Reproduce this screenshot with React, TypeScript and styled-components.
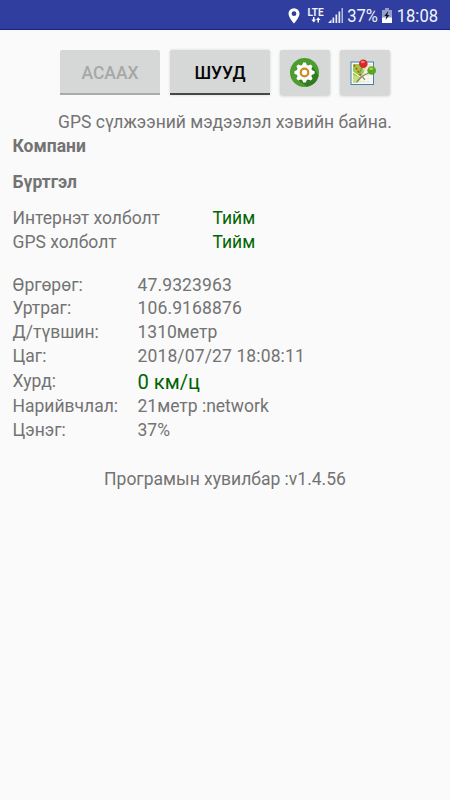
import React from "react";
import styled, { createGlobalStyle } from "styled-components";

const GlobalStyle = createGlobalStyle`
  * { box-sizing: border-box; }
  html, body { margin: 0; background: #fafafa; }
  body { font-family: Roboto, "Noto Sans", sans-serif; color: #737373; font-size: 17.5px; }
`;

const Screen = styled.div`
  width: 450px;
  height: 800px;
  overflow: hidden;
  background: #fafafa;
`;

const StatusBar = styled.header`
  height: 30px;
  background: #303f9f;
  border-bottom: 1px solid #16218c;
  display: flex;
  justify-content: flex-end;
  align-items: center;
  padding: 2px 12px 0 0;
  color: #f1f3fb;
  svg { display: block; flex: none; }
`;

const StatusText = styled.span<{ $width: number; $gap?: number }>`
  width: ${(p) => p.$width}px;
  margin-right: ${(p) => p.$gap ?? 0}px;
  font-size: 18.5px;
  line-height: 28px;
  white-space: nowrap;
  display: flex;
  justify-content: flex-end;
  transform: scaleX(0.895);
  transform-origin: right center;
`;

const StatusIcon = styled.span<{ $gap: number }>`
  margin-right: ${(p) => p.$gap}px;
`;

const Toolbar = styled.div`
  display: flex;
  justify-content: center;
  gap: 10px;
  padding-top: 20px;
  height: 81px;
`;

const TextButton = styled.button<{ $off?: boolean }>`
  width: 100px;
  height: 45px;
  border: 0;
  border-bottom: 2px solid ${(p) => (p.$off ? "#a9abab" : "#45484a")};
  border-radius: 2px 2px 0 0;
  background: #d6d8d7;
  color: ${(p) => (p.$off ? "#a6a8a7" : "#050505")};
  font: 500 17.5px Roboto, sans-serif;
  padding: 2px 0 0;
  box-shadow: ${(p) => (p.$off ? "none" : "0 0 3px rgba(0, 0, 0, 0.16)")};
`;

const IconButton = styled.button`
  width: 50px;
  height: 45px;
  border: 0;
  border-radius: 2px;
  background: #d6d8d7;
  padding: 0;
  display: flex;
  align-items: center;
  justify-content: center;
  box-shadow: 0 1px 3px rgba(0, 0, 0, 0.2);
`;

const Notice = styled.p`
  margin: 0;
  height: 23.7px;
  line-height: 23.7px;
  text-align: center;
  white-space: nowrap;
`;

const Body = styled.main`
  padding-left: 12.5px;
`;

const Heading = styled.h2`
  margin: 0;
  height: 36.3px;
  line-height: 23.7px;
  font-size: 17.5px;
  font-weight: 700;
`;

const Rows = styled.dl<{ $label: number }>`
  margin: 0 0 18.8px;
  display: grid;
  grid-template-columns: ${(p) => p.$label}px 1fr;
`;

const Label = styled.dt`
  line-height: 23.75px;
  white-space: nowrap;
  align-self: center;
`;

const Value = styled.dd<{ $tone?: "good" | "speed"; $spacing?: number }>`
  margin: 0;
  line-height: ${(p) => (p.$tone === "speed" ? 26.5 : 23.75)}px;
  font-size: ${(p) => (p.$tone === "speed" ? 20.2 : 17.5)}px;
  letter-spacing: ${(p) => p.$spacing ?? 0}px;
  color: ${(p) => (p.$tone ? "#006400" : "inherit")};
  white-space: nowrap;
`;

const Version = styled.footer`
  padding-top: 5.6px;
  line-height: 24px;
  text-align: center;
`;

const PinIcon = () => (
  <svg width="12" height="16" viewBox="0 0 12 16">
    <path fill="#fff" fillRule="evenodd" d="M6 .2A5.5 5.5 0 0 0 .5 5.7C.5 9.4 6 15.6 6 15.6s5.5-6.2 5.5-9.900A5.5 5.5 0 0 0 6 .2Zm0 3.100a2.400 2.400 0 1 1 0 4.800 2.400 2.400 0 0 1 0-4.800Z" />
  </svg>
);

const LteBadge = styled.span`
  display: flex;
  flex-direction: column;
  align-items: center;
  width: 17px;
  margin-right: 4px;
  font: 700 10px/9px Roboto, sans-serif;
`;

const ArrowsIcon = () => (
  <svg width="10" height="6" viewBox="0 0 10 6">
    <path fill="#fff" d="M2 0h1.500v2.600H5L2.800 5.600.4 2.600H2ZM6.500 5.600H8V3h1.500L7.200.2 5 3h1.500Z" />
  </svg>
);

const SignalIcon = () => (
  <svg width="16" height="15" viewBox="0 0 16 15">
    <path fill="#e8ebf8" d="M0 15l3.500-3.500V15Z" />
    <path fill="#e8ebf8" d="M4.500 9.500h1.700V15H4.500ZM7.500 6.500h1.700V15H7.500ZM10.500 3.500h1.700V15h-1.700Z" />
    <path fill="#b3bbe2" d="M13.500 0h1.500v15h-1.500Z" />
  </svg>
);

const BatteryIcon = () => (
  <svg width="10" height="15" viewBox="0 0 10 15">
    <path fill="#949fcd" d="M3 0h4v2h3v8H0V2h3Z" />
    <path fill="#fff" d="M0 9.500h10V15H0Z" />
    <path fill="#10131f" d="M6.300 3 2.300 8h2.200L3.500 12 7.400 7H5.300Z" />
  </svg>
);

const teeth = [0, 45, 90, 135, 180, 225, 270, 315];

const GearIcon = () => (
  <svg width="30" height="30" viewBox="0 0 30 30">
    <circle cx="14.500" cy="14.500" r="14.500" fill="#4a9d2e" />
    <path fill="#327b22" d="m21.500 6.500 7.100 11.300A14.500 14.500 0 0 1 17 28.800L7.500 21.500Z" />
    <g fill="#fff">
      <circle cx="14.500" cy="14.500" r="7.800" />
      {teeth.map((a) => (
        <path key={a} d="M11.800 8 13.200 4.400h2.600L17.200 8Z" transform={`rotate(${a} 14.5 14.5)`} />
      ))}
    </g>
    <circle cx="14.500" cy="14.500" r="3.800" fill="#fff" stroke="#d08a1c" strokeWidth="2.200" />
  </svg>
);

const MapIcon = () => (
  <svg width="30" height="30" viewBox="0 0 30 30">
    <path fill="#4482a8" d="M.5 3.500H24v23.500H.5Z" />
    <path fill="#f5fafc" d="M1.500 4.500H23V26H1.500Z" />
    <path fill="#eee8cf" d="M3 6h18.500v18.500H3Z" />
    <path fill="#9ccb43" d="M3 6h9l2 8-3 4-3 6.500H3Z" />
    <path fill="#cbdc86" d="m3 17 6 2-2 5.500H3ZM13 6h4l-3 7Z" />
    <path stroke="#fff" strokeWidth="1" fill="none" d="m3 14 7 5M16 13v11M10 22h11M20 16v8M14 19h7" />
    <path stroke="#c94a30" strokeWidth="1.600" strokeDasharray="2 1.500" fill="none" d="m4 7 4 6 3 5" />
    <path stroke="#7d8b70" strokeWidth="1.200" fill="none" d="m12.500 8-3 7M18.500 15l-6 3-6 6M12 18l3 4" />
    <circle cx="13.300" cy="5.700" r="4.300" fill="#d9272c" />
    <ellipse cx="12.800" cy="4" rx="2" ry="1.200" fill="#f07f7f" />
    <circle cx="21.700" cy="12.500" r="4.300" fill="#5ba520" />
    <ellipse cx="21.200" cy="10.800" rx="2" ry="1.200" fill="#a2d268" />
  </svg>
);

type Row = { label: string; value: string; tone?: "good" | "speed"; spacing?: number };

const connections: Row[] = [
  { label: "Интернэт холболт", value: "Тийм", tone: "good" },
  { label: "GPS холболт", value: "Тийм", tone: "good" },
];

const readings: Row[] = [
  { label: "Өргөрөг:", value: "47.9323963", spacing: 0.13 },
  { label: "Уртраг:", value: "106.9168876", spacing: 0.13 },
  { label: "Д/түвшин:", value: "1310метр" },
  { label: "Цаг:", value: "2018/07/27 18:08:11", spacing: 0.13 },
  { label: "Хурд:", value: "0 км/ц", tone: "speed" },
  { label: "Нарийвчлал:", value: "21метр :network" },
  { label: "Цэнэг:", value: "37%" },
];

const DataRows = ({ rows, label }: { rows: Row[]; label: number }) => (
  <Rows $label={label}>
    {rows.map((r) => (
      <React.Fragment key={r.label}>
        <Label>{r.label}</Label>
        <Value $tone={r.tone} $spacing={r.spacing}>{r.value}</Value>
      </React.Fragment>
    ))}
  </Rows>
);

export default function App() {
  return (
    <Screen>
      <GlobalStyle />
      <StatusBar>
        <StatusIcon $gap={7}><PinIcon /></StatusIcon>
        <LteBadge>LTE<ArrowsIcon /></LteBadge>
        <StatusIcon $gap={3}><SignalIcon /></StatusIcon>
        <StatusText $width={31} $gap={4}>37%</StatusText>
        <StatusIcon $gap={5}><BatteryIcon /></StatusIcon>
        <StatusText $width={41}>18:08</StatusText>
      </StatusBar>
      <Toolbar>
        <TextButton $off>АСААХ</TextButton>
        <TextButton>ШУУД</TextButton>
        <IconButton aria-label="Settings"><GearIcon /></IconButton>
        <IconButton aria-label="Map"><MapIcon /></IconButton>
      </Toolbar>
      <Notice>GPS сүлжээний мэдээлэл хэвийн байна.</Notice>
      <Body>
        <Heading>Компани</Heading>
        <Heading>Бүртгэл</Heading>
        <DataRows rows={connections} label={200} />
        <DataRows rows={readings} label={125} />
      </Body>
      <Version>Програмын хувилбар :v1.4.56</Version>
    </Screen>
  );
}
